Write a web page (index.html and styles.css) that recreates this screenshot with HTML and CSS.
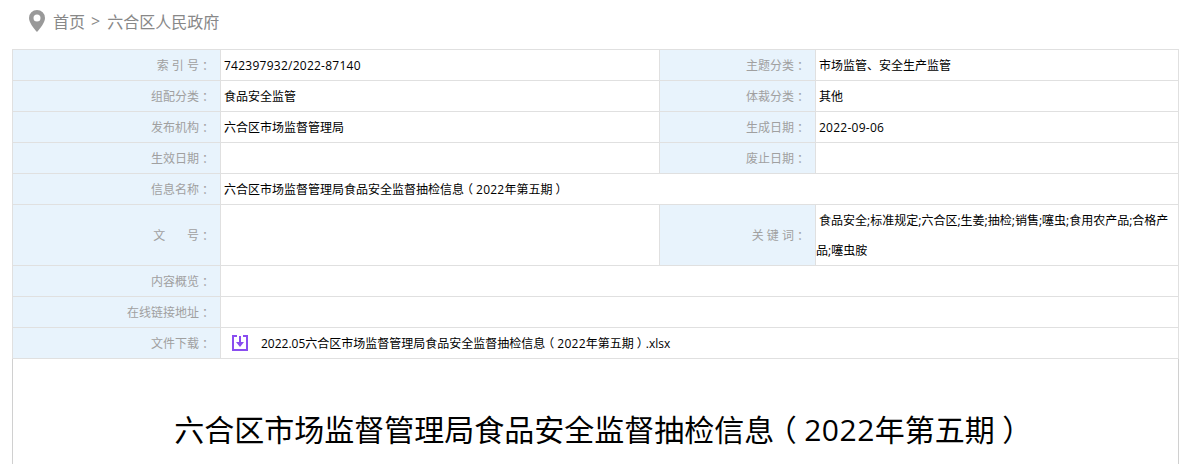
FILE: index.html
```html
<!DOCTYPE html>
<html lang="zh-CN">
<head>
    <meta charset="UTF-8">
    <title>六合区市场监督管理局食品安全监督抽检信息（2022年第五期）</title>
    <link rel="stylesheet" href="styles.css">
</head>
<body>
    <div class="crumb">
        <svg class="pin" width="16" height="22" viewBox="0 0 16 22">
            <path fill="#999" fill-rule="evenodd" d="M8 0a8 8 0 0 1 8 8c0 4.500-4.500 10-8 14C4.500 18 0 12.500 0 8a8 8 0 0 1 8-8zm0 4.500a3.500 3.500 0 1 0 0 7 3.500 3.500 0 0 0 0-7z"/>
        </svg>
        <a href="#">首页</a>
        <span class="sep">&gt;</span>
        <a href="#">六合区人民政府</a>
    </div>
    <div class="main">
        <table class="info">
            <colgroup>
                <col class="c-label">
                <col class="c-value">
                <col class="c-label2">
                <col>
            </colgroup>
            <tr>
                <th>索 引 号<span class="mark">：</span></th>
                <td><span class="num">742397932/2022-87140</span></td>
                <th>主题分类<span class="mark">：</span></th>
                <td>市场监管、安全生产监管</td>
            </tr>
            <tr>
                <th>组配分类<span class="mark">：</span></th>
                <td>食品安全监管</td>
                <th>体裁分类<span class="mark">：</span></th>
                <td>其他</td>
            </tr>
            <tr>
                <th>发布机构<span class="mark">：</span></th>
                <td>六合区市场监督管理局</td>
                <th>生成日期<span class="mark">：</span></th>
                <td><span class="num">2022-09-06</span></td>
            </tr>
            <tr>
                <th>生效日期<span class="mark">：</span></th>
                <td></td>
                <th>废止日期<span class="mark">：</span></th>
                <td></td>
            </tr>
            <tr>
                <th>信息名称<span class="mark">：</span></th>
                <td colspan="3">六合区市场监督管理局食品安全监督抽检信息<span class="mark">（</span><span class="num">2022</span>年第五期<span class="mark">）</span></td>
            </tr>
            <tr class="tall">
                <th>文 &nbsp; &nbsp; &nbsp; 号<span class="mark">：</span></th>
                <td></td>
                <th>关 键 词<span class="mark">：</span></th>
                <td class="keys"><div>&nbsp;食品安全;标准规定;六合区;生姜;抽检;销售;噻虫;食用农产品;合格产品;噻虫胺</div></td>
            </tr>
            <tr>
                <th>内容概览<span class="mark">：</span></th>
                <td colspan="3"></td>
            </tr>
            <tr>
                <th>在线链接地址<span class="mark">：</span></th>
                <td colspan="3"></td>
            </tr>
            <tr>
                <th>文件下载<span class="mark">：</span></th>
                <td colspan="3">
                    <a class="file" href="#">
                        <svg width="16" height="16" viewBox="0 0 16 16">
                            <path fill="none" stroke="#8a4df0" stroke-width="2" d="M5 1H1v14h14V1h-4"/>
                            <path fill="#8a4df0" d="M7 1h2v6h3l-4 5-4-5h3z"/>
                        </svg>
                        <span>2022.05六合区市场监督管理局食品安全监督抽检信息<span class="mark">（</span><span class="num">2022</span>年第五期<span class="mark">）</span>.xlsx</span>
                    </a>
                </td>
            </tr>
        </table>
        <h1>六合区市场监督管理局食品安全监督抽检信息<span class="mark">（</span><span class="num">2022</span>年第五期<span class="mark">）</span></h1>
    </div>
</body>
</html>
```

FILE: styles.css
```css
body {
    margin: 0;
    font-family: "Open Sans", "Noto Sans CJK SC", sans-serif;
    font-size: 12px;
    color: #000;
    background-color: #fff;
    overflow: hidden;
}

a {
    color: inherit;
    text-decoration: none;
}

.crumb {
    display: flex;
    align-items: center;
    height: 41px;
    padding: 0 0 2px 29px;
    font-size: 16px;
    color: #888;
}

.pin {
    margin-right: 8px;
}

.sep {
    margin: 0 7px 0 6px;
}

.main {
    margin: 6px 10px 0 12px;
    border-left: 1px solid #d0d0d0;
    border-right: 1px solid #d0d0d0;
    height: 420px;
}

.info {
    width: calc(100% + 2px);
    margin-left: -1px;
    border-collapse: collapse;
    table-layout: fixed;
}

.c-label {
    width: 208px;
}

.c-value {
    width: 439px;
}

.c-label2 {
    width: 156px;
}

.info th,
.info td {
    height: 30px;
    padding: 0;
    border: 1px solid #e0e0e0;
}

.info th {
    padding-right: 9px;
    text-align: right;
    font-weight: normal;
    color: #a0a0a0;
    background-color: #e8f3fc;
}

.info td {
    padding-left: 3px;
}

.info .tall th,
.info .tall td {
    height: 60px;
}

.info .keys {
    padding-left: 0;
    line-height: 30px;
}

.keys div {
    margin: 1px 0 -1px;
}

/* 冒号和括号要居中在一个字宽里 */
.mark {
    padding: 0 0.25em;
    font-feature-settings: "halt";
}

.num {
    letter-spacing: 0.25px;
}

h1 .num {
    letter-spacing: 0.5px;
}

.file {
    display: flex;
    align-items: center;
    gap: 13px;
    padding-left: 8px;
}

h1 {
    margin: 51px 0 0;
    padding-left: 8px;
    text-align: center;
    font-size: 30px;
    line-height: 40px;
    font-weight: normal;
}
```
